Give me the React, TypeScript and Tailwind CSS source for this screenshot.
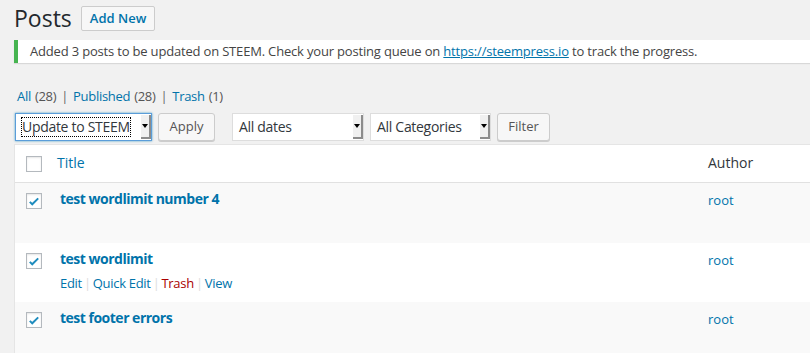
import React from "react";

const font = { fontFamily: '"Open Sans", "Noto Sans", sans-serif' };

function Check({ checked }: { checked?: boolean }) {
  return (
    <div className="flex h-4 w-4 items-center justify-center border border-[#b4b9be] bg-white shadow-[inset_0_1px_2px_rgba(0,0,0,0.1)]">
      {checked && (
        <svg viewBox="0 0 20 20" className="h-[15px] w-[15px]">
          <path d="M4 10.5l3.5 3.5L16 5.5" fill="none" stroke="#1e8cbe" strokeWidth="2.8" />
        </svg>
      )}
    </div>
  );
}

function Select({ label, w, focus }: { label: string; w: string; focus?: boolean }) {
  return (
    <div
      className={`flex h-[28px] items-center justify-between bg-white pl-[6px] ${w} ${
        focus ? "border border-[#5b9dd9] shadow-[0_0_2px_rgba(30,140,190,0.8)]" : "border border-[#dddddd]"
      }`}
    >
      <span
        className={`text-[14px] leading-[18px] tracking-[-0.3px] text-[#32373c] ${
          focus ? "outline outline-1 outline-dotted outline-black" : ""
        }`}
      >
        {label}
      </span>
      <div className="flex h-[24px] w-[10px] items-center justify-center border-r-2 border-b-2 border-r-[#8c8c8c] border-b-[#8c8c8c] bg-[#f0f0f0]">
        <div className="h-0 w-0 border-x-[3px] border-t-[4px] border-x-transparent border-t-black" />
      </div>
    </div>
  );
}

function Btn({ label, w }: { label: string; w: string }) {
  return (
    <div
      className={`flex h-[28px] items-center justify-center rounded-[3px] border border-[#cccccc] bg-[#f7f7f7] text-[13px] text-[#555] shadow-[0_1px_0_#ccc] ${w}`}
    >
      {label}
    </div>
  );
}

const rows = [
  { title: "test wordlimit number 4", bg: "bg-[#f9f9f9]", h: "h-[60px]", actions: false },
  { title: "test wordlimit", bg: "bg-white", h: "h-[59px]", actions: true },
  { title: "test footer errors", bg: "bg-[#f9f9f9]", h: "h-[60px]", actions: false },
];

export default function App() {
  return (
    <div className="h-[353px] w-[810px] overflow-hidden bg-[#f1f1f1] pl-[14px]" style={font}>
      <div className="flex items-center pt-[4px]">
        <h1 className="text-[23px] leading-[29px] font-normal text-[#23282d]">Posts</h1>
        <div className="ml-[9px] flex h-[25px] items-center rounded-[2px] border border-[#cccccc] bg-[#f7f7f7] px-[8px] text-[13px] font-semibold text-[#0073aa]">
          Add New
        </div>
      </div>

      <div className="mt-[7px] flex h-[23px] items-center border-l-4 border-[#46b450] bg-white pl-[12px] text-[13px] tracking-[-0.18px] text-[#444] shadow-[0_1px_1px_rgba(0,0,0,0.1)]">
        <span>
          Added 3 posts to be updated on STEEM. Check your posting queue on{" "}
          <span className="text-[#0073aa] underline">https://steempress.io</span> to track the progress.
        </span>
      </div>

      <div className="mt-[24px] flex items-center pl-[3px] text-[13px] leading-[18px] tracking-[-0.3px] text-[#555]">
        <span className="text-[#0073aa]">All</span>
        <span className="ml-1">(28)</span>
        <span className="mx-[5px] text-[#666]">|</span>
        <span className="text-[#0073aa]">Published</span>
        <span className="ml-1">(28)</span>
        <span className="mx-[5px] text-[#666]">|</span>
        <span className="text-[#0073aa]">Trash</span>
        <span className="ml-1">(1)</span>
      </div>

      <div className="mt-[8px] flex items-center">
        <div className="ml-[1px]">
          <Select label="Update to STEEM" w="w-[137px]" focus />
        </div>
        <div className="ml-[6px]">
          <Btn label="Apply" w="w-[57px]" />
        </div>
        <div className="ml-[17px]">
          <Select label="All dates" w="w-[132px]" />
        </div>
        <div className="ml-[6px]">
          <Select label="All Categories" w="w-[121px]" />
        </div>
        <div className="ml-[6px]">
          <Btn label="Filter" w="w-[53px]" />
        </div>
      </div>

      <div className="mt-[3px] border-t border-l border-[#e5e5e5] bg-white">
        <div className="flex h-[38px] items-center border-b border-[#e1e1e1]">
          <div className="ml-[11px]">
            <Check />
          </div>
          <span className="ml-[15px] -mt-[2px] text-[14px] text-[#0073aa]">Title</span>
          <span className="ml-auto -mt-[2px] w-[102px] text-[14px] text-[#32373c]">Author</span>
        </div>
        {rows.map((r) => (
          <div key={r.title} className={`flex items-start ${r.bg} ${r.h}`}>
            <div className="ml-[11px] mt-[10px]">
              <Check checked />
            </div>
            <div className="ml-[18px] mt-[6px] flex-1">
              <div className="text-[14px] leading-[19px] font-bold tracking-[-0.5px] text-[#0073aa]">{r.title}</div>
              {r.actions && (
                <div className="mt-[6px] flex items-center text-[13px] leading-[18px] tracking-[-0.3px] text-[#0073aa]">
                  <span>Edit</span>
                  <span className="mx-[2px] text-[#ddd]">|</span>
                  <span>Quick Edit</span>
                  <span className="mx-[2px] text-[#ddd]">|</span>
                  <span className="text-[#a00]">Trash</span>
                  <span className="mx-[2px] text-[#ddd]">|</span>
                  <span>View</span>
                </div>
              )}
            </div>
            <div className="mt-[8px] w-[102px] text-[13px] leading-[18px] text-[#0073aa]">root</div>
          </div>
        ))}
      </div>
    </div>
  );
}
